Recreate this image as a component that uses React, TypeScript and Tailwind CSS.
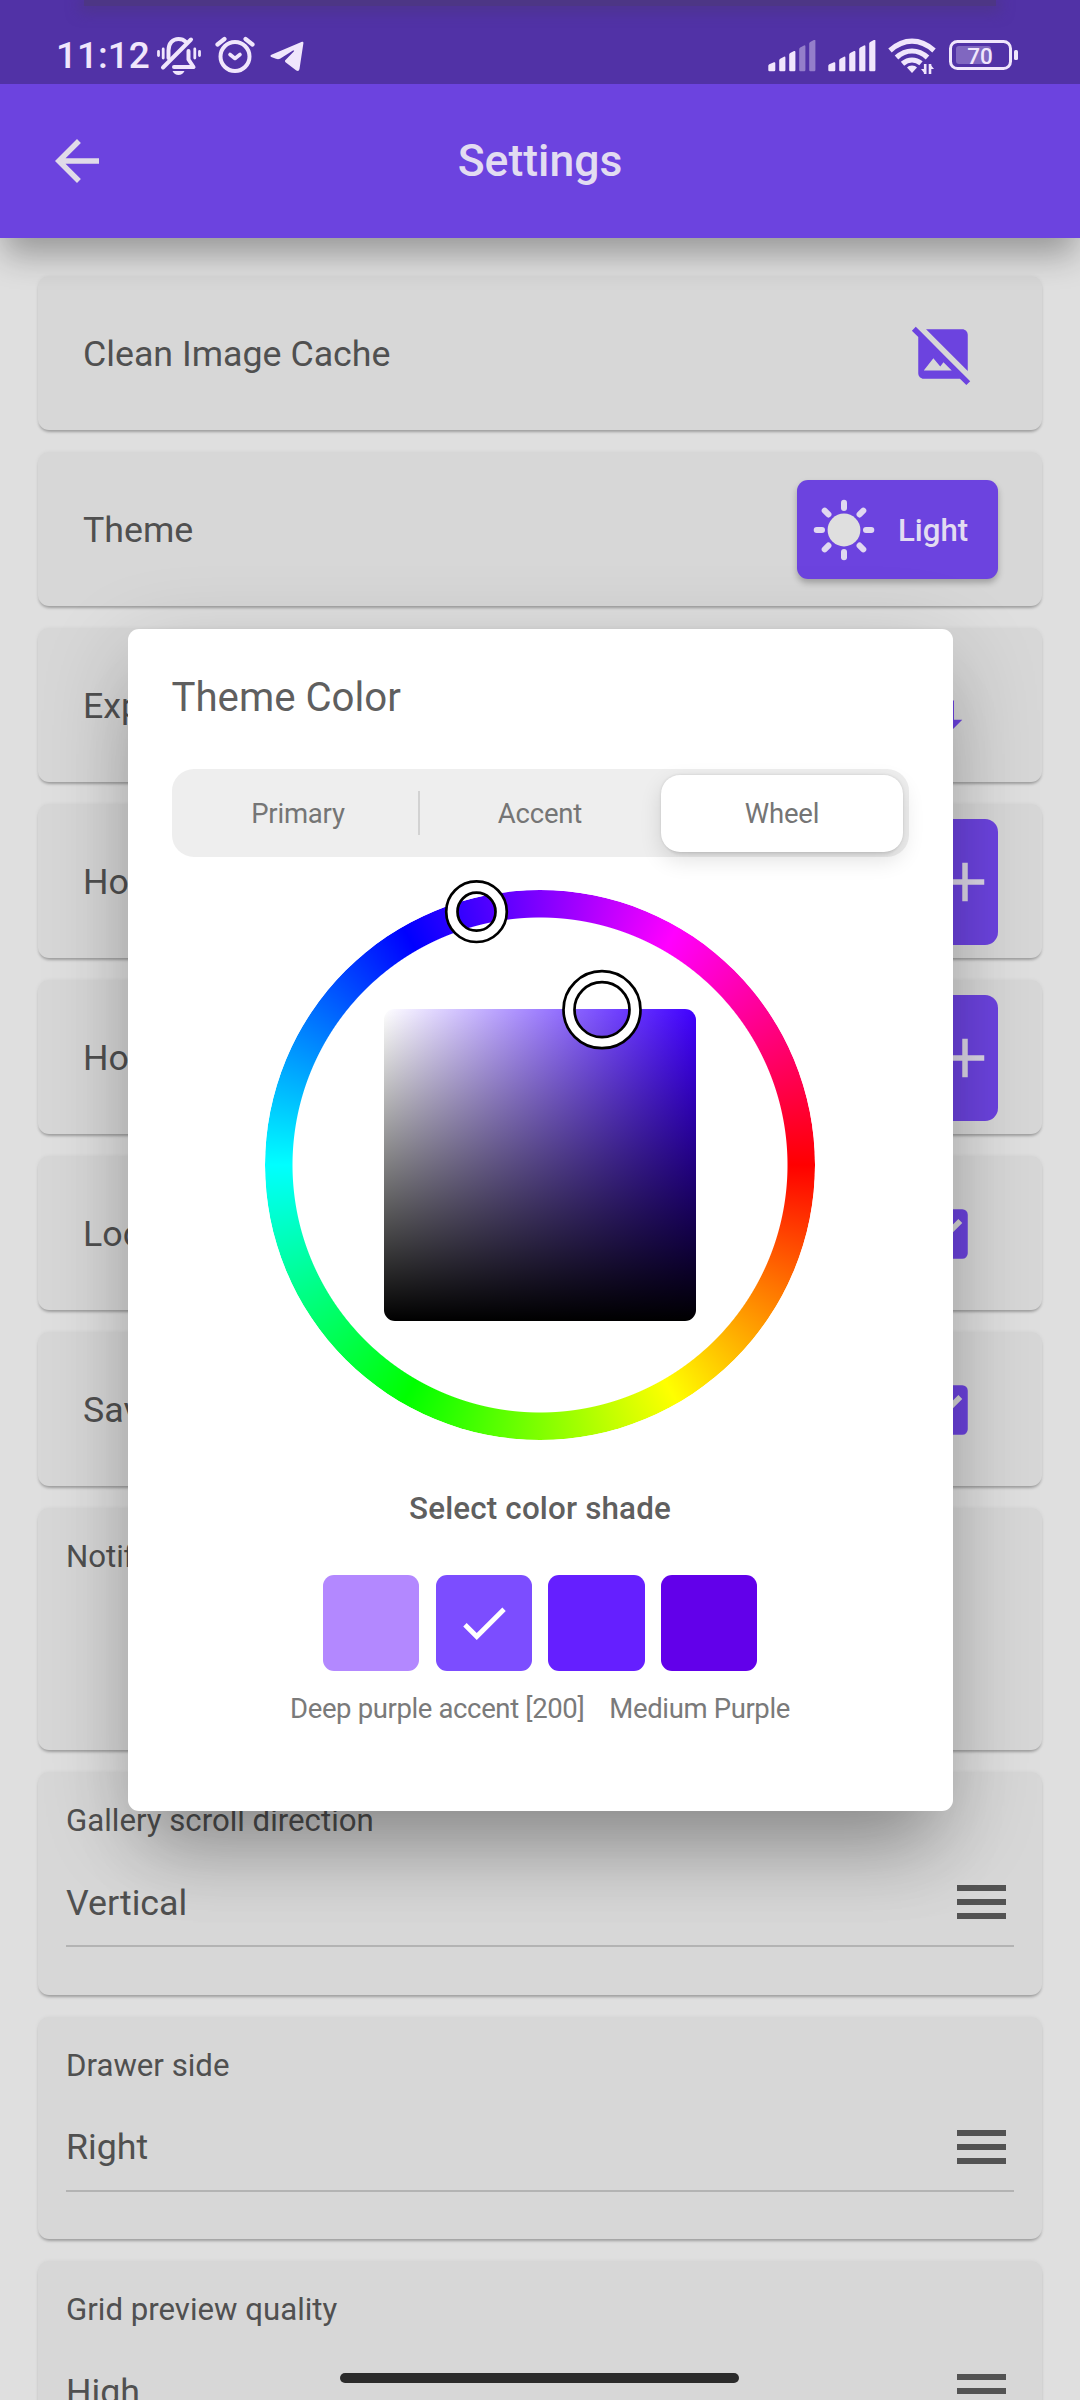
import React from 'react';
import { MdArrowBack, MdImageNotSupported, MdImportExport, MdAdd, MdCheckBox, MdCheck } from 'react-icons/md';

const SHADES = [
  { color: 'bg-[#b388ff]', selected: false },
  { color: 'bg-[#7c4dff]', selected: true },
  { color: 'bg-[#651fff]', selected: false },
  { color: 'bg-[#6200ea]', selected: false },
];

const SignalBars: React.FC<{ level: number }> = ({ level }) => (
  <svg width="48" height="32" viewBox="0 0 48 32" fill="#f0e6fc">
    {[0, 1, 2, 3, 4].map((i) => {
      const x = i === 0 ? 0.3 : i * 10 + 1.2;
      const w = i === 0 ? 7 : 6.2;
      const top = 22.2 - i * 5.6;
      return (
        <path
          key={i}
          opacity={i < level ? 1 : 0.42}
          d={`M${x} ${top + 3.6}q0-1 1-1.5l${w - 2.4}-2q1.4-.6 1.4 1V30q0 1.2-1.2 1.2H${x + 1.2}q-1.2 0-1.2-1.2z`}
        />
      );
    })}
  </svg>
);

const StatusBar = () => (
  <div className="relative z-20 h-[84px] w-full bg-[#5132a6] flex items-start text-[#f0e6fc]">
    <div className="absolute inset-x-[84px] top-0 h-[6px] bg-[#4d3685] shadow-[0_2px_14px_4px_#4d3685]/70" />
    <div className="pl-[56px] pt-[34px] w-[156px] text-[37px] leading-[44px] font-medium whitespace-nowrap">11:12</div>
    {/* Vibrate / muted bell */}
    <svg className="mt-[36px]" width="46" height="40" viewBox="0 0 46 40" fill="none" stroke="#f0e6fc" strokeWidth="4" strokeLinecap="round">
      <path d="M12.5 22v-7.500C12.500 7 17 3 22.500 3c3 0 5.500 1 7.300 2.800" />
      <path d="M7 31.500L35 3.500" />
      <path d="M32.500 15v8.500l5 7.500H18" strokeLinejoin="round" />
      <path d="M2.500 15.500v4M7.200 13v9M38.800 13v9M43.500 15.500v4" strokeWidth="2.800" />
      <path d="M16.500 35h12q-2 4-6 4t-6-4z" fill="#f0e6fc" stroke="none" />
    </svg>
    <svg className="ml-[13px] mt-[36px]" width="40" height="38" viewBox="0 0 40 38" fill="none" stroke="#f0e6fc" strokeWidth="4" strokeLinecap="round" strokeLinejoin="round">
      <circle cx="20" cy="20.500" r="14.500" />
      <path d="M15 18.500l5 4 5-4" strokeWidth="3.600" />
      <path d="M2.500 8.500L9.500 3M37.500 8.500L30.500 3" strokeWidth="4.200" />
    </svg>
    <svg className="ml-[15px] mt-[41px]" width="34" height="31" viewBox="0 0 34 31" fill="#f0e6fc">
      <path d="M32 .8q1.600-.4 1.400 1.400L29.500 28q-.6 3-3.200 1.600L15.500 21.300q-1.200-1.200 0-2.400L24 10.200q.6-1.200-1-.6L10 17.800q-2 .8-4 0L1.200 16q-1.600-1 .2-2.200z" />
    </svg>
    <div className="ml-auto flex items-start">
      <div className="mt-[40px]"><SignalBars level={3} /></div>
      <div className="mt-[40px] ml-[12px]"><SignalBars level={5} /></div>
      <svg className="ml-[12px] mt-[38px]" width="48" height="37" viewBox="0 0 48 37" fill="none" stroke="#f0e6fc" strokeWidth="5.200">
        <path d="M2 12.500Q12.500 3.200 24 3.200T46 12.500" />
        <path d="M8.500 19.500Q15.500 13 24 13t15.500 6.500" />
        <path d="M14.500 25.800Q19 22 24 22t9 3.300" />
        <path d="M24 27.500q3.500 0 5 2l-5 5.500-5-5.500q1.500-2 5-2z" fill="#f0e6fc" stroke="none" />
        <path d="M37.200 26v10M42 26v10" strokeWidth="2.600" />
        <path d="M33 31l4 5V31zM46 31l-4-5v5z" fill="#f0e6fc" stroke="none" />
      </svg>
      <svg className="ml-[13px] mt-[40px] mr-[61px]" width="70" height="31" viewBox="0 0 70 31">
        <rect x="1.500" y="1.500" width="60" height="27" rx="7" fill="none" stroke="#f0e6fc" strokeWidth="3" />
        <rect x="7" y="6" width="35" height="18" rx="3" fill="#f0e6fc" opacity=".3" />
        <rect x="65" y="10" width="4" height="10" rx="1.500" fill="#f0e6fc" />
        <text x="31" y="23.500" textAnchor="middle" fontFamily="Roboto, sans-serif" fontSize="22.500" fontWeight="500" fill="#f0e6fc">70</text>
      </svg>
    </div>
  </div>
);

const AppBar = () => (
  <header className="relative z-10 h-[154px] bg-[#6c43df] px-[44px] flex items-center shadow-[0_20px_32px_-4px_rgba(0,0,0,0.32)]">
    <MdArrowBack className="text-[#e0dbe8]" size={66} />
    <h1 className="flex-1 pr-[66px] text-center text-[44.500px] font-medium text-[#e2dcf1]">Settings</h1>
  </header>
);

const Card: React.FC<{ className: string; children: React.ReactNode }> = ({ className, children }) => (
  <section className={`shrink-0 rounded-[11px] bg-[#d7d7d7] shadow-[0_3px_3px_-1px_rgba(0,0,0,0.28),0_0_4px_rgba(0,0,0,0.05)] ${className}`}>
    {children}
  </section>
);

const Row: React.FC<{ label: string; children: React.ReactNode }> = ({ label, children }) => (
  <Card className="h-[154px] pl-[45px] pr-[44px] flex items-center justify-between">
    <span className="pt-[3px] text-[35.750px] text-[#505050]">{label}</span>
    {children}
  </Card>
);

const IconSlot: React.FC<{ children: React.ReactNode }> = ({ children }) => (
  <div className="mr-[22px] pt-[2px] text-[#6c43df]">{children}</div>
);

const AddButton = () => (
  <div className="mt-[2px] h-[126px] w-[132px] rounded-[13px] bg-[#6c43df] flex items-center justify-end text-[#dcd6e6]">
    <MdAdd size={66} />
  </div>
);

const SelectCard: React.FC<{ label: string; value: string }> = ({ label, value }) => (
  <Card className="h-[222.500px] px-[28px] pt-[31px]">
    <div className="text-[31.200px] leading-[36px] text-[#505050]">{label}</div>
    <div className="mt-[23px] h-[85px] border-b-2 border-[#b3b3b3] flex items-center justify-between">
      <span className="text-[35.750px] text-[#505050]">{value}</span>
      <div className="mr-[8px] -mt-[3px] flex flex-col gap-[8px]">
        <div className="h-[6px] w-[49px] bg-[#535353]" />
        <div className="h-[6px] w-[49px] bg-[#535353]" />
        <div className="h-[6px] w-[49px] bg-[#535353]" />
      </div>
    </div>
  </Card>
);

const Handle: React.FC<{ cx: number; cy: number; outer: number; inner: number }> = ({ cx, cy, outer, inner }) => (
  <g fill="none">
    <circle cx={cx} cy={cy} r={(outer + inner) / 2} stroke="#fff" strokeWidth={outer - inner} />
    <circle cx={cx} cy={cy} r={outer} stroke="#000" strokeWidth="2.700" />
    <circle cx={cx} cy={cy} r={inner} stroke="#000" strokeWidth="2.700" />
  </g>
);

const ColorWheel = () => (
  <div className="relative mx-auto size-[550px] flex items-center justify-center">
    <div className="absolute inset-0 rounded-full bg-[conic-gradient(from_90deg,#f00,#ff0,#0f0,#0ff,#00f,#f0f,#f00)] mask-[radial-gradient(circle,transparent_247px,black_248px)]" />
    <div className="size-[312px] rounded-[11px] bg-[linear-gradient(to_bottom,transparent,#000),linear-gradient(to_right,#fff,#4000ff)]" />
    <svg className="absolute inset-0 overflow-visible" width="550" height="550" viewBox="0 0 550 550">
      <Handle cx={211.500} cy={21.700} outer={30.300} inner={19} />
      <Handle cx={337} cy={119.700} outer={38.500} inner={27.500} />
    </svg>
  </div>
);

const ThemeColorDialog = () => (
  <div className="absolute inset-0 z-30 flex justify-center items-start pt-[629px]">
    <div className="w-[825px] h-[1182px] rounded-[11px] bg-white px-[44px] shadow-[0_60px_70px_-24px_rgba(0,0,0,0.22),0_24px_90px_0_rgba(0,0,0,0.2)]">
      <h2 className="pt-[45px] text-[40.200px] leading-[48px] text-[#5f5f5f]">Theme Color</h2>
      <div className="mt-[47px] h-[88px] rounded-[22px] bg-[#eeeeee] p-[5.500px] flex items-stretch text-[27.500px] tracking-[-0.2px] text-[#757575]">
        <div className="flex-1 pt-[2px] flex items-center justify-center">Primary</div>
        <div className="self-center h-[44px] w-[2px] -mx-px bg-[#d2d2d2]" />
        <div className="flex-1 pt-[2px] flex items-center justify-center">Accent</div>
        <div className="flex-1 pt-[2px] rounded-[19px] bg-white flex items-center justify-center shadow-[0_8px_22px_rgba(0,0,0,0.12),0_8px_3px_-5px_rgba(0,0,0,0.06),0_0_3px_rgba(0,0,0,0.12)]">Wheel</div>
      </div>
      <div className="mt-[33px]"><ColorWheel /></div>
      <h3 className="mt-[51px] text-center text-[31.400px] leading-[36px] tracking-[0.15px] font-medium text-[#5f5f5f]">Select color shade</h3>
      <div className="mt-[48px] flex justify-center gap-[16.500px]">
        {SHADES.map((shade) => (
          <div key={shade.color} className={`size-[96.250px] rounded-[11px] flex items-center justify-center text-white ${shade.color}`}>
            {shade.selected && <MdCheck size={58} />}
          </div>
        ))}
      </div>
      <div className="mt-[21px] flex justify-center gap-[25px] text-[27.500px] leading-[33px] tracking-[-0.37px] text-[#7a7a7a] whitespace-nowrap">
        <span>Deep purple accent [200]</span>
        <span>Medium Purple</span>
      </div>
    </div>
  </div>
);

const SunIcon = () => (
  <svg width="62" height="62" viewBox="-31 -31 62 62">
    <circle r="16.400" fill="#dfdfdf" />
    {[0, 45, 90, 135, 180, 225, 270, 315].map((deg) => (
      <line key={deg} x1="0" y1="-22" x2="0" y2="-27.300" stroke="#e0d8f0" strokeWidth="6" strokeLinecap="round" transform={`rotate(${deg})`} />
    ))}
  </svg>
);

export default function App() {
  return (
    <div className="relative w-[1080px] h-[2400px] overflow-hidden bg-[#dfdfdf] font-[Roboto,sans-serif]">
      <StatusBar />
      <AppBar />
      <main className="pt-[38px] px-[38px] flex flex-col gap-[22px]">
        <Row label="Clean Image Cache">
          <IconSlot><MdImageNotSupported size={66} /></IconSlot>
        </Row>
        <Row label="Theme">
          <div className="h-[99px] w-[201px] rounded-[11px] bg-[#6c43df] pl-[16px] pt-[2px] flex items-center shadow-[0_4px_6px_rgba(0,0,0,0.25)]">
            <SunIcon />
            <span className="ml-[23px] pt-[2px] text-[31.200px] font-medium text-[#e2dcf1]">Light</span>
          </div>
        </Row>
        <Row label="Export">
          <IconSlot><MdImportExport size={66} /></IconSlot>
        </Row>
        <Row label="Home"><AddButton /></Row>
        <Row label="Home"><AddButton /></Row>
        <Row label="Lock">
          <IconSlot><MdCheckBox size={66} /></IconSlot>
        </Row>
        <Row label="Save">
          <IconSlot><MdCheckBox size={66} /></IconSlot>
        </Row>
        <Card className="h-[242px] px-[28px] pt-[31px]">
          <div className="text-[31.200px] leading-[36px] text-[#505050]">Notifications</div>
        </Card>
        <SelectCard label="Gallery scroll direction" value="Vertical" />
        <SelectCard label="Drawer side" value="Right" />
        <SelectCard label="Grid preview quality" value="High" />
      </main>
      <ThemeColorDialog />
      {/* Gesture bar */}
      <div className="absolute z-40 bottom-[17px] left-[340px] h-[10px] w-[399px] rounded-full bg-[#2b2b2b]" />
    </div>
  );
}
